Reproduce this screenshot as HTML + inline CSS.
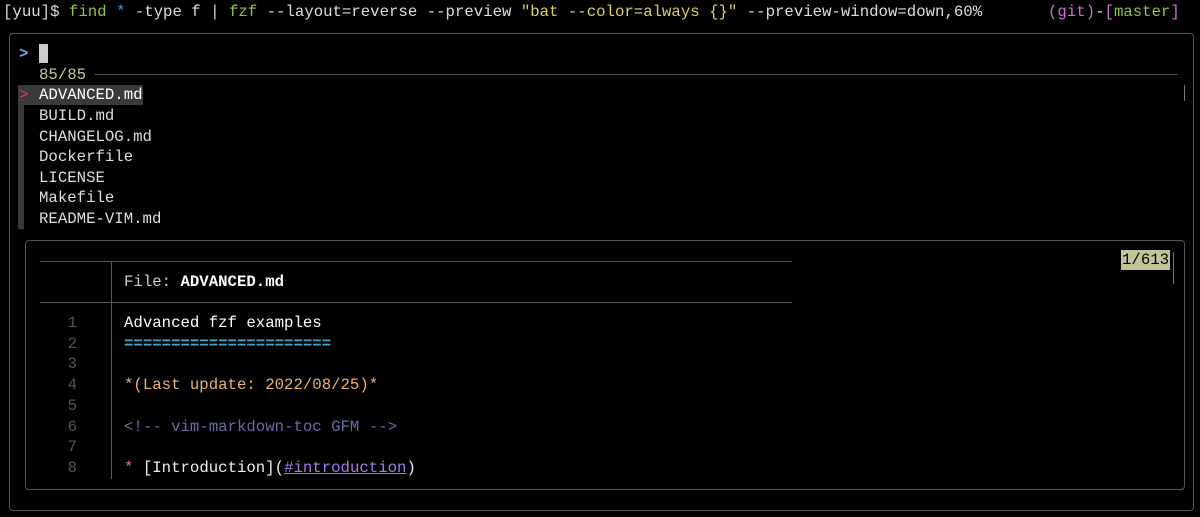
<!DOCTYPE html>
<html><head><style>
body{margin:0;background:#000;width:1200px;height:517px;overflow:hidden;position:relative;font-family:"Liberation Mono","DejaVu Sans Mono",monospace;font-size:15.7px;color:#ddd}
.t{position:absolute;white-space:pre;line-height:20px}
.g{color:#8fc83a}.y{color:#d6d26a}.m{color:#c96fd0}
.box{position:absolute;border:1px solid #555;border-radius:4px}
.hl{position:absolute;height:1px;background:#555}
.num{position:absolute;left:40px;width:37px;text-align:right;color:#555;white-space:pre;line-height:20px}
</style></head><body>
<div class="t" style="left:3px;top:2px">[yuu]$ <span class="g">find</span> <span style="color:#5a8fe0">*</span> -type f | <span class="g">fzf</span> --layout=reverse --preview <span class="y">"bat --color=always {}"</span> --preview-window=down,60%       <span class="m">(git)</span>-<span class="m">[</span><span class="g">master</span><span class="m">]</span></div>
<div class="box" style="left:9px;top:33px;width:1183px;height:476px"></div>
<div class="t" style="left:19px;top:44px;color:#7aa2f7;font-weight:bold">&gt;</div>
<div style="position:absolute;left:39px;top:44px;width:9px;height:19px;background:#ccc"></div>
<div class="t" style="left:39px;top:65px;color:#c8c8a0">85/85</div>
<div class="hl" style="left:95px;top:74px;width:1083px"></div>
<div style="position:absolute;left:18px;top:85px;width:125px;height:20px;background:#3a3a3a"></div>
<div style="position:absolute;left:18px;top:105px;width:6px;height:124px;background:#3a3a3a"></div>
<div class="t" style="left:19px;top:85px;color:#e0366c">&gt;</div>
<div class="t" style="left:39px;top:85px;color:#fff">ADVANCED.md</div>
<div class="t" style="left:39px;top:106px;line-height:20.6px">BUILD.md
CHANGELOG.md
Dockerfile
LICENSE
Makefile
README-VIM.md</div>
<div style="position:absolute;left:1184px;top:85px;width:1px;height:16px;background:#777"></div>
<div class="box" style="left:25px;top:240px;width:1158px;height:248px"></div>
<div class="hl" style="left:40px;top:261px;width:752px"></div>
<div class="hl" style="left:40px;top:302px;width:752px"></div>
<div style="position:absolute;left:111px;top:261px;width:1px;height:218px;background:#555"></div>
<div class="t" style="left:124px;top:272px;color:#ccc">File: <b style="color:#fff">ADVANCED.md</b></div>
<div class="num" style="top:313px;line-height:20.7px">1
2
3
4
5
6
7
8</div>
<div class="t" style="left:124px;top:313px;line-height:20.7px"><span style="color:#fff">Advanced fzf examples</span>
<span style="color:#4aa3c0;font-weight:bold">======================</span>

<span style="color:#f0b070">*(Last update: 2022/08/25)*</span>

<span style="color:#6a6aa8">&lt;!-- vim-markdown-toc GFM --&gt;</span>

<span style="color:#f06bc0">*</span> <span style="color:#eee">[Introduction](<span style="color:#a07ee8;text-decoration:underline">#introduction</span>)</span></div>
<div class="t" style="left:1121px;top:250px;background:#c3c39a;color:#000;padding:0 1px">1/613</div>
<div style="position:absolute;left:1173px;top:252px;width:1px;height:32px;background:#777"></div>
</body></html>
